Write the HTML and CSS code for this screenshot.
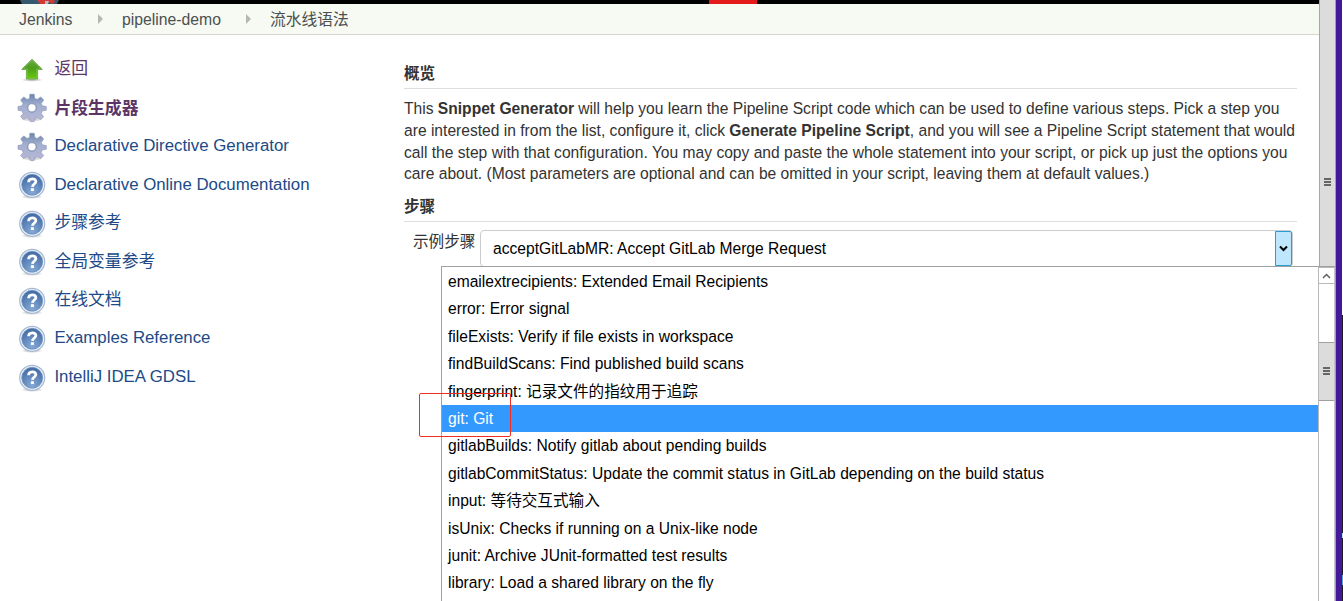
FILE: index.html
```html
<!DOCTYPE html>
<html lang="zh-CN">
<head>
<meta charset="utf-8">
<title>流水线语法</title>
<link rel="stylesheet" href="styles.css">
</head>
<body>
<svg class="defs" width="0" height="0" aria-hidden="true">
  <defs>
    <linearGradient id="green" x1="0" y1="0" x2="0" y2="1"><stop offset="0" stop-color="#6aa644"/><stop offset=".45" stop-color="#4f9e1c"/><stop offset="1" stop-color="#65cb0a"/></linearGradient>
    <linearGradient id="steel" x1="0" y1="0" x2="0" y2="1"><stop offset="0" stop-color="#6885ad"/><stop offset=".4" stop-color="#a3afcf"/><stop offset="1" stop-color="#b9b8d8"/></linearGradient>
    <radialGradient id="blue" cx=".5" cy=".85" r=".85"><stop offset="0" stop-color="#85a9d5"/><stop offset="1" stop-color="#4069a3"/></radialGradient>
    <radialGradient id="shade"><stop offset="0" stop-color="#777" stop-opacity=".65"/><stop offset="1" stop-color="#777" stop-opacity="0"/></radialGradient>
    <symbol id="up" viewBox="0 0 30 30">
      <ellipse cx="15" cy="24.8" rx="11" ry="2" fill="url(#shade)"/>
      <path d="M15 4.2 25.4 14.5H20.6V24H9.4V14.5H4.6Z" fill="url(#green)" stroke="#589c35" stroke-width=".7" stroke-linejoin="round"/>
      <path d="M15 5.5 23.5 13.8H19.8V23.2H10.2V13.8H6.5Z" fill="none" stroke="#9bd477" stroke-width=".6" opacity=".7"/>
    </symbol>
    <symbol id="gear" viewBox="0 0 30 30">
      <ellipse cx="15" cy="26" rx="11" ry="3" fill="url(#shade)"/>
      <path fill-rule="evenodd" fill="url(#steel)" stroke="#8a94b4" stroke-width=".6" stroke-linejoin="round" d="M12.8 1.2h4.4l.6 4.2 2.4 1 3.5-2.5 3 3-2.4 3.6.9 2.3 4.1.7v3.7l-4.1.8-1 2.4 2.4 3.3-3 3-3.4-2.4-2.4 1-.8 3.3h-3.6l-.8-3.3-2.500-1-3.400 2.400-3-3 2.400-3.300-1-2.400-4.100-.8v-3.700l4-.7 1-2.300-2.300-3.600 3-3 3.500 2.500 2.300-1ZM15 10.800a4 4 0 1 0 0 8 4 4 0 0 0 0-8Z"/>
      <circle cx="15" cy="14.800" r="4.700" fill="none" stroke="#8795b8" stroke-width=".8"/>
    </symbol>
    <symbol id="help" viewBox="0 0 30 30">
      <ellipse cx="15" cy="26.600" rx="11" ry="2.400" fill="url(#shade)"/>
      <circle cx="15.200" cy="14.800" r="12.500" fill="#edf2f9" stroke="#a4b9d5" stroke-width="1.200"/>
      <circle cx="15.200" cy="14.800" r="10.500" fill="url(#blue)" stroke="#6f90bd" stroke-width=".7"/>
      <path d="M11.600 12.200c0-4.200 7.300-4.400 7.300-.6 0 2.300-3.200 2.400-3.500 5.200" fill="none" stroke="#fff" stroke-width="2.700"/>
      <rect x="13.900" y="18.200" width="3" height="2.800" fill="#fff"/>
    </symbol>
  </defs>
</svg>
<div class="window">
  <div class="page">
    <div class="header">
      <svg class="mascot" width="42" height="4" viewBox="0 0 42 4"><path d="M2 0H41L39 4H4Z" fill="#34596e"/><path d="M19 0H36L37 2 34 4 31 2 28 4H22Z" fill="#d33833"/><path d="M27 1h4l-1 3h-3Z" fill="#bbb"/></svg>
      <div class="notice"></div>
    </div>
    <div class="crumbs">
      <span class="c1">Jenkins</span><i class="tri"></i><span class="c2">pipeline-demo</span><i class="tri"></i><span class="c3">流水线语法</span>
    </div>
    <div class="body">
      <div class="side">
        <a class="task visited"><svg class="ico"><use href="#up"/></svg><span class="han">返回</span></a>
        <a class="task visited current"><svg class="ico"><use href="#gear"/></svg><span>片段生成器</span></a>
        <a class="task"><svg class="ico"><use href="#gear"/></svg><span class="latin">Declarative Directive Generator</span></a>
        <a class="task"><svg class="ico"><use href="#help"/></svg><span class="latin">Declarative Online Documentation</span></a>
        <a class="task"><svg class="ico"><use href="#help"/></svg><span class="han">步骤参考</span></a>
        <a class="task"><svg class="ico"><use href="#help"/></svg><span class="han">全局变量参考</span></a>
        <a class="task"><svg class="ico"><use href="#help"/></svg><span class="han">在线文档</span></a>
        <a class="task"><svg class="ico"><use href="#help"/></svg><span>Examples Reference</span></a>
        <a class="task"><svg class="ico"><use href="#help"/></svg><span class="latin">IntelliJ IDEA GDSL</span></a>
      </div>
      <div class="main">
        <h2 class="title">概览</h2>
        <p class="intro">This <b>Snippet Generator</b> will help you learn the Pipeline Script code which can be used to define various steps. Pick a step you<br>are interested in from the list, configure it, click <b>Generate Pipeline Script</b>, and you will see a Pipeline Script statement that would<br>call the step with that configuration. You may copy and paste the whole statement into your script, or pick up just the options you<br>care about. (Most parameters are optional and can be omitted in your script, leaving them at default values.)</p>
        <h2 class="title">步骤</h2>
        <div class="field">
          <span class="label">示例步骤</span>
          <div class="select"><span class="value">acceptGitLabMR: Accept GitLab Merge Request</span><span class="arrow"><svg width="9" height="7" viewBox="0 0 9 7"><path d="M1 1.5 4.5 5 8 1.5" fill="none" stroke="#000" stroke-width="2"/></svg></span></div>
        </div>
      </div>
    </div>
  </div>
  <div class="scroll"><div class="grip"></div></div>
  <div class="frame"></div>
  <div class="desktop"><i class="glint"></i><i class="glint low"></i></div>
</div>
<div class="menu">
  <div class="options">
    <div class="opt">emailextrecipients: Extended Email Recipients</div>
    <div class="opt">error: Error signal</div>
    <div class="opt">fileExists: Verify if file exists in workspace</div>
    <div class="opt">findBuildScans: Find published build scans</div>
    <div class="opt">fingerprint: 记录文件的指纹用于追踪</div>
    <div class="opt selected">git: Git</div>
    <div class="opt">gitlabBuilds: Notify gitlab about pending builds</div>
    <div class="opt">gitlabCommitStatus: Update the commit status in GitLab depending on the build status</div>
    <div class="opt">input: 等待交互式输入</div>
    <div class="opt">isUnix: Checks if running on a Unix-like node</div>
    <div class="opt">junit: Archive JUnit-formatted test results</div>
    <div class="opt">library: Load a shared library on the fly</div>
  </div>
  <div class="bar">
    <div class="up"><svg width="9" height="6" viewBox="0 0 9 6"><path d="M1 5 4.5 1.5 8 5" fill="none" stroke="#606060" stroke-width="1.5"/></svg></div>
    <div class="thumb"><div class="grip"></div></div>
  </div>
</div>
<div class="mark"></div>
</body>
</html>
```
FILE: styles.css
```css
* { box-sizing: border-box; }
body { margin: 0; width: 1343px; height: 601px; overflow: hidden; position: relative; background: #fff; color: #333; font: 15.61px "Liberation Sans", "Noto Sans CJK SC", sans-serif; white-space: nowrap; }
.defs { position: absolute; }
.window { display: flex; height: 601px; }
.page { width: 1319px; display: flex; flex-direction: column; }
.header { height: 4px; background: #000; display: flex; }
.mascot { margin-left: 18px; display: block; }
.notice { width: 48px; height: 4px; margin-left: 649px; background: #e4191c; }
.crumbs { height: 31px; background: #f6faf2; border-bottom: 1px solid #d3d7cf; display: flex; align-items: center; padding-left: 19px; color: #4d4f50; font-size: 15.75px; }
.c1 { width: 79px; padding-top: 2px; }
.tri { width: 0; height: 0; border-left: 5px solid #b5b7b2; border-top: 5px solid transparent; border-bottom: 5px solid transparent; }
.c2 { width: 143px; padding: 2px 0 0 19px; }
.c3 { padding: 0 0 2px 19px; }
.body { display: flex; }
.side { width: 404px; padding: 14px 0 0 17px; font-size: 16.82px; }
.task { height: 38.5px; display: flex; align-items: center; color: #204a87; gap: 7.4px; }
.visited { color: #5c3566; }
.current { font-weight: bold; }
.latin { padding-top: 2px; }
.han { padding-bottom: 3px; }
.ico { width: 30px; height: 30px; margin-top: 3px; flex: none; }
.main { width: 893px; padding-top: 25px; }
.title { margin: 0; height: 29px; line-height: 28px; font-size: 15.6px; font-weight: bold; border-bottom: 1px solid #dedede; }
.intro { margin: 9px 0 0; line-height: 21.75px; height: 95px; }
.field { display: flex; padding: 8px 0 0 9px; }
.label { width: 67px; line-height: 24px; }
.select { width: 813px; height: 37px; border: 1px solid #ccc; border-radius: 4px; display: flex; justify-content: space-between; color: #000; }
.value { padding-left: 12px; line-height: 35px; }
.arrow { width: 17px; height: 35px; border: 1px solid #2d9bd3; background: #bee6fd; display: flex; align-items: center; justify-content: center; border-radius: 0 2px 2px 0; }
.scroll { width: 17px; background: #dcdcdc; border-left: 1px solid #a6a6a6; border-right: 1px solid #a0a0a0; padding: 178px 0 0 4px; }
.grip { width: 7px; height: 8px; background: repeating-linear-gradient(#666 0 2px, transparent 2px 3px); }
.frame { width: 6px; background: #43189b; }
.desktop { width: 1px; background: linear-gradient(#fff 0 315px, #1c1c1c 315px); display: flex; flex-direction: column; }
.glint { height: 5px; margin-top: 533px; background: #aee4ee; }
.low { height: 10px; margin-top: 37px; background: #4aa9d6; }
.menu { position: absolute; left: 441px; top: 266px; width: 895px; height: 335px; background: #fff; border: solid #a0a0a0; border-width: 1px 1px 0; display: flex; color: #000; overflow: hidden; }
.options { flex: 1; padding-top: 1px; }
.opt { height: 27.4px; line-height: 27.4px; padding-left: 6px; }
.selected { background: #3399ff; color: #fff; }
.bar { width: 17px; border-left: 1px solid #b8b8b8; border-right: 1px solid #c4c4c4; }
.up { height: 17px; border: solid #b8b8b8; border-width: 1px 0; display: flex; align-items: center; justify-content: center; }
.thumb { margin-top: 58px; height: 59px; background: #dcdcdc; border: solid #a0a0a0; border-width: 1px 0; padding: 24px 0 0 4px; }
.mark { position: absolute; left: 419px; top: 393px; width: 92px; height: 44px; border: 1px solid #f22c20; border-radius: 2px; }
```
